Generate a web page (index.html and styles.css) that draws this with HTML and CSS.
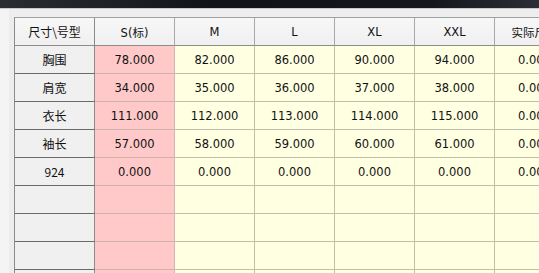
FILE: index.html
```html
<!DOCTYPE html>
<html>
<head>
<meta charset="utf-8">
<link rel="stylesheet" href="styles.css">
</head>
<body>
<div class="titlebar"></div>
<div class="area">
  <div class="grid">
    <div class="c hd corner">尺寸\号型</div>
    <div class="c hd">S(标)</div>
    <div class="c hd">M</div>
    <div class="c hd">L</div>
    <div class="c hd">XL</div>
    <div class="c hd">XXL</div>
    <div class="c hd">实际尺寸</div>

    <div class="c rh">胸围</div>
    <div class="c s">78.000</div>
    <div class="c y">82.000</div>
    <div class="c y">86.000</div>
    <div class="c y">90.000</div>
    <div class="c y">94.000</div>
    <div class="c y">0.000</div>

    <div class="c rh">肩宽</div>
    <div class="c s">34.000</div>
    <div class="c y">35.000</div>
    <div class="c y">36.000</div>
    <div class="c y">37.000</div>
    <div class="c y">38.000</div>
    <div class="c y">0.000</div>

    <div class="c rh">衣长</div>
    <div class="c s">111.000</div>
    <div class="c y">112.000</div>
    <div class="c y">113.000</div>
    <div class="c y">114.000</div>
    <div class="c y">115.000</div>
    <div class="c y">0.000</div>

    <div class="c rh">袖长</div>
    <div class="c s">57.000</div>
    <div class="c y">58.000</div>
    <div class="c y">59.000</div>
    <div class="c y">60.000</div>
    <div class="c y">61.000</div>
    <div class="c y">0.000</div>

    <div class="c rh">924</div>
    <div class="c s">0.000</div>
    <div class="c y">0.000</div>
    <div class="c y">0.000</div>
    <div class="c y">0.000</div>
    <div class="c y">0.000</div>
    <div class="c y">0.000</div>

    <div class="c rh"></div><div class="c s"></div><div class="c y"></div><div class="c y"></div><div class="c y"></div><div class="c y"></div><div class="c y"></div>
    <div class="c rh"></div><div class="c s"></div><div class="c y"></div><div class="c y"></div><div class="c y"></div><div class="c y"></div><div class="c y"></div>
    <div class="c rh"></div><div class="c s"></div><div class="c y"></div><div class="c y"></div><div class="c y"></div><div class="c y"></div><div class="c y"></div>
    <div class="c rh"></div><div class="c s"></div><div class="c y"></div><div class="c y"></div><div class="c y"></div><div class="c y"></div><div class="c y"></div>
  </div>
</div>
</body>
</html>
```
FILE: styles.css
```css
html, body {
  margin: 0;
  padding: 0;
  width: 539px;
  height: 273px;
  overflow: hidden;
  background: #efefef;
  font-family: "DejaVu Sans", "Noto Sans CJK SC", sans-serif;
  font-size: 11.5px;
  color: #111;
}
.titlebar {
  height: 8px;
  background: linear-gradient(to right, #2a2e33, #111418 40%, #14181d 80%, #2b2f35);
  border-bottom: 1px solid #c9c9c9;
}
.area {
  padding: 8px 0 0 14px;
  background: linear-gradient(to right, #f4f4f4 0, #f4f4f4 9px, #ececec 9px, #eeeeee 14px);
  height: 264px;
  overflow: hidden;
}
.grid {
  display: grid;
  grid-template-columns: repeat(7, 80px);
  grid-auto-rows: 28px;
  border-left: 1px solid #8a8a8a;
  border-top: 1px solid #a0a0a0;
  width: max-content;
}
.c {
  box-sizing: border-box;
  display: flex;
  align-items: center;
  justify-content: center;
  white-space: nowrap;
  overflow: hidden;
  border-right: 1px solid #c2bca8;
  border-bottom: 1px solid #c2bca8;
}
.hd {
  background: linear-gradient(#f7f7f7, #f0f0f0);
  border-right: 1px solid #a9a9a9;
  border-bottom: 1px solid #8c8c8c;
  font-family: "Noto Sans CJK SC", "DejaVu Sans", sans-serif;
  font-size: 12px;
}
.hd:not(.corner) {
  font-family: "DejaVu Sans", "Noto Sans CJK SC", sans-serif;
  font-size: 11.5px;
}
.corner {
  border-right: 1px solid #8a8a8a;
}
.rh {
  background: #f0f0f0;
  border-right: 1px solid #8a8a8a;
  border-bottom: 1px solid #6a6a6a;
  font-family: "Noto Sans CJK SC", "DejaVu Sans", sans-serif;
  font-size: 12px;
}
.s {
  background: #ffc9c9;
  border-right-color: #d6b4b0;
  border-bottom-color: #cdb2ae;
}
.y {
  background: #ffffe2;
}
```
